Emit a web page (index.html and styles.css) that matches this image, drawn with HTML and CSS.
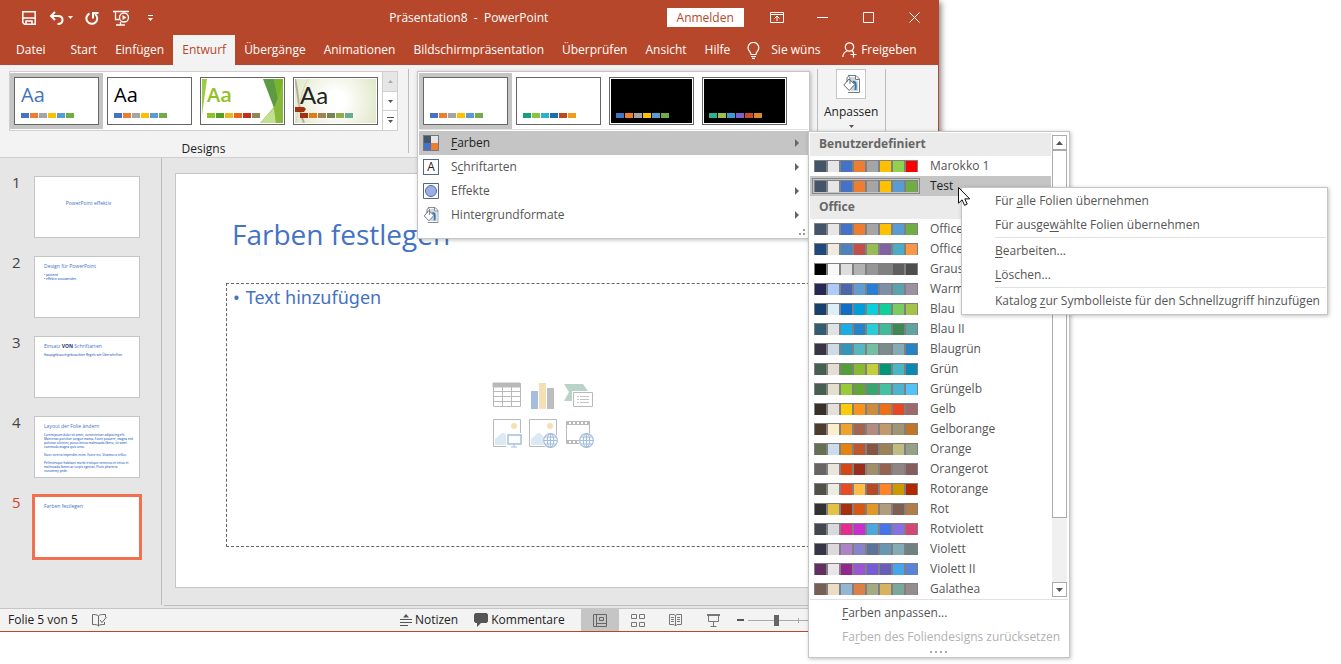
FILE: index.html
```html
<!DOCTYPE html>
<html lang="de">
<head>
  <meta charset="UTF-8">
  <title>Präsentation8 - PowerPoint</title>
  <link rel="stylesheet" href="styles.css">
</head>
<body>
  <div class="app">
    <header class="titlebar">
      <div class="quick">
        <button class="tool" aria-label="Speichern"><svg width="14" height="14" viewBox="0 0 14 14" fill="none" stroke="#fff" stroke-width="1.5"><path d="M.8.8h12.4v12.4H2.5L.8 11.5zM1 7h12M4 13v-3h6v3"/></svg></button>
        <button class="tool wide" aria-label="Rückgängig"><svg width="24" height="14" viewBox="0 0 24 14" fill="none" stroke="#fff" stroke-width="2"><path d="M6 1 2 5l4 4M2 5h7c3.500 0 4.500 2 4.500 4 0 2.500-2 4-5 4"/><path d="M19 5h5l-2.500 3z" fill="#fff" stroke="none"/></svg></button>
        <button class="tool" aria-label="Wiederholen"><svg width="14" height="14" viewBox="0 0 14 14" fill="none" stroke="#fff" stroke-width="2"><path d="M4.500 2.500A5.400 5.400 0 1 0 10 3M8 7.500V2h5.500"/></svg></button>
        <button class="tool" aria-label="Von Beginn an"><svg width="17" height="16" viewBox="0 0 17 16" fill="none" stroke="#fff" stroke-width="1.300"><path d="M0 1.500h16M2.500 2v7.500H6M3 15h9M7.500 12v3"/><circle cx="11" cy="7.500" r="4.500"/><path d="M9.500 5v5l4-2.500z" fill="#fff" stroke="none"/></svg></button>
        <button class="tool" aria-label="Symbolleiste anpassen"><svg width="7" height="8" viewBox="0 0 7 8" fill="#fff"><path d="M1 1h5v1H1zM1 4h5L3.500 7z"/></svg></button>
      </div>
      <div class="doc-title">Präsentation8&nbsp; -&nbsp; PowerPoint</div>
      <div class="window-tools">
        <button class="login">Anmelden</button>
        <button class="win" aria-label="Menüband-Anzeigeoptionen"><svg width="14" height="11" viewBox="0 0 14 11" fill="none" stroke="#fff"><path d="M.5.5h13v10H.5zM.5 2.500h13M7 9V4.500M4.500 6.500 7 4l2.500 2.500"/></svg></button>
        <button class="win" aria-label="Minimieren"><svg width="11" height="11" stroke="#fff"><path d="M0 5.500h11"/></svg></button>
        <button class="win" aria-label="Maximieren"><svg width="11" height="11" fill="none" stroke="#fff"><path d="M.5.5h10v10H.5z"/></svg></button>
        <button class="win" aria-label="Schließen"><svg width="11" height="11" stroke="#fff"><path d="m.5.5 10 10M10.500.5l-10 10"/></svg></button>
      </div>
    </header>

    <nav class="tabs">
      <button class="tab file">Datei</button>
      <button class="tab">Start</button>
      <button class="tab">Einfügen</button>
      <button class="tab active">Entwurf</button>
      <button class="tab">Übergänge</button>
      <button class="tab">Animationen</button>
      <button class="tab">Bildschirmpräsentation</button>
      <button class="tab">Überprüfen</button>
      <button class="tab">Ansicht</button>
      <button class="tab">Hilfe</button>
      <label class="ask">
        <svg width="13" height="17" viewBox="0 0 13 17" fill="none" stroke="#fff" stroke-width="1.200"><path d="M4 12.500C4 9.500 1 9 1 5.800a5.300 5.300 0 0 1 10.800 0C11.800 9 9 9.500 9 12.500zM4 14.500h5M5 16.400h3"/></svg>
        <input type="text" value="Sie wünschen" aria-label="Sie wünschen">
      </label>
      <button class="share"><svg width="15" height="17" viewBox="0 0 15 17" fill="none" stroke="#fff" stroke-width="1.200"><circle cx="7.500" cy="5" r="4.200"/><path d="M.8 15c.2-3 1.500-5 4.200-6M10 9l1 1M8.500 12.500h6M11.500 9.500v6"/></svg>Freigeben</button>
    </nav>

    <section class="ribbon">
      <div class="group designs">
        <div class="gallery">
          <button class="theme selected" aria-label="Office"><span class="sheet"><span class="aa blue">Aa</span><span class="dots" data-colors="4472c4 ed7d31 a5a5a5 ffc000 5b9bd5 70ad47"></span></span></button>
          <button class="theme" aria-label="Office-Design"><span class="sheet"><span class="aa">Aa</span><span class="dots" data-colors="4472c4 ed7d31 a5a5a5 ffc000 5b9bd5 70ad47"></span></span></button>
          <button class="theme" aria-label="Facette"><span class="sheet">
            <svg class="art" viewBox="0 0 81 44" preserveAspectRatio="none"><path d="M0 0h5L0 36z" fill="#9bcc42"/><path d="M64 0h17v44H58l14-16z" fill="#8fc43c"/><path d="M61 0h11l4 20-4 9z" fill="#5d9a43"/><path d="M72 0h9v4l-5 16z" fill="#79b52b"/><path d="m58 44 14-15 2 15z" fill="#c3df92"/><path d="m72 29 9-22v37h-7z" fill="#86b93a"/></svg>
            <span class="aa facet">Aa</span><span class="dots" data-colors="90c226 54a021 e6b91e e76618 c42f1a 918655"></span></span></button>
          <button class="theme" aria-label="Fetzen"><span class="sheet organic">
            <svg class="art" viewBox="0 0 81 44" preserveAspectRatio="none" fill="none"><path d="M0 0c4 15 2 28 9 44" stroke="#b9ad99" stroke-width="2"/><path d="M13 0C6 12 3 30 1 44" stroke="#d7d6bd"/><path d="M0 28h9l2 2-2 3H0z" fill="#a5300f"/></svg>
            <span class="aa gothic">Aa</span><span class="dots" data-colors="a5300f de7e18 9f8351 728653 92aa4c 6aac91"></span></span></button>
          <div class="gallery-nav">
            <button aria-label="Nach oben" disabled><svg width="5" height="3" fill="#aaa"><path d="M0 3h5L2.500 0z"/></svg></button>
            <button aria-label="Nach unten"><svg width="5" height="3" fill="#555"><path d="M0 0h5L2.500 3z"/></svg></button>
            <button aria-label="Weitere"><svg width="7" height="7" fill="#555"><path d="M0 0h7v1H0zM1 3h5L3.500 6z"/></svg></button>
          </div>
        </div>
        <div class="group-label">Designs</div>
      </div>
      <div class="group customize">
        <button class="adjust">
          <span class="adjust-icon"><svg width="17" height="18" viewBox="0 0 17 18"><use href="#bucket"/></svg></span>
          <span>Anpassen</span>
          <svg width="5" height="3" fill="#555"><path d="M0 0h5L2.500 3z"/></svg>
        </button>
      </div>
    </section>

    <main class="workspace">
      <aside class="slides">
        <div class="slide-row"><span class="num">1</span><div class="mini center"><p class="mini-title">PowerPoint effektiv</p></div></div>
        <div class="slide-row"><span class="num">2</span><div class="mini"><p class="mini-title">Design für PowerPoint</p><p>• passend<br>• effektiv anzuwenden</p></div></div>
        <div class="slide-row"><span class="num">3</span><div class="mini"><p class="mini-title">Einsatz <b>VON</b> Schriftarten</p><p>Hauptgebrauch gebrauchter Regeln wie Überschriften</p></div></div>
        <div class="slide-row"><span class="num">4</span><div class="mini"><p class="mini-title">Layout der Folie ändern</p><p>Loremipsum dolor sit amet, consectetuer adipiscing elit. Maecenas porttitor congue massa. Fusce posuere, magna sed pulvinar ultricies, purus lectus malesuada libero, sit amet commodo magna quis urna.</p><p>Nunc viverra imperdiet enim. Fusce est. Vivamus a tellus.</p><p>Pellentesque habitant morbi tristique senectus et netus et malesuada fames ac turpis egestas. Proin pharetra nonummy pede.</p></div></div>
        <div class="slide-row current"><span class="num">5</span><div class="mini"><p class="mini-title">Farben festlegen</p></div></div>
      </aside>
      <div class="stage">
        <article class="slide">
          <h1>Farben festlegen</h1>
          <div class="placeholder">
            <p class="bullet">Text hinzufügen</p>
            <div class="inserts">
              <button aria-label="Tabelle einfügen"><svg width="30" height="28" fill="none" stroke="#b9b9b9"><path d="M1 1h27v4H1z" fill="#b9b9b9"/><path d="M1.500 1.500h27v23h-27zM1.500 9.500h27M1.500 14.500h27M1.500 19.500h27M10.500 5v19M19.500 5v19"/></svg></button>
              <button aria-label="Diagramm einfügen"><svg width="30" height="28"><path d="M3 9h7v18H3z" fill="#a5bedd"/><path d="M11 1h7v26h-7z" fill="#f5dfb5"/><path d="M19 6h7v21h-7z" fill="#bdbdbd"/></svg></button>
              <button aria-label="SmartArt einfügen"><svg width="30" height="28"><path d="M0 2h19l5 7H9v10H0l5-9z" fill="#b9d3c8"/><path d="M8 9h22v17H8z" fill="#fff"/><path d="M9.500 10.500h19v14h-19z" fill="#fff" stroke="#b9b9b9"/><path d="M13 14.500h2m1 0h9m-12 3h2m1 0h9m-12 3h2m1 0h9" stroke="#c4c4c4"/></svg></button>
              <button aria-label="Bilder einfügen"><svg width="30" height="30"><path d="M1.500 1.500h27v27h-27z" fill="#fff" stroke="#b9b9b9"/><circle cx="22" cy="8" r="3" fill="#f5dfb5"/><path d="M3 27v-6l7-6h2l7 7v5z" fill="#dce8f2"/><path d="M14 15h16v15H14z" fill="#fff"/><path d="M16 17h13v9H16z" fill="none" stroke="#a5bedd" stroke-width="1.500"/><path d="M22 26v3m-3 0h6" stroke="#a5bedd"/></svg></button>
              <button aria-label="Onlinebilder einfügen"><svg width="30" height="30"><path d="M1.500 1.500h27v27h-27z" fill="#fff" stroke="#b9b9b9"/><circle cx="22" cy="8" r="3" fill="#f5dfb5"/><path d="M3 27v-6l7-6h2l7 7v5z" fill="#dce8f2"/><use href="#globe"/></svg></button>
              <button aria-label="Video einfügen"><svg width="30" height="30"><path d="M2.500 3.500h23v22h-23zM2.500 6.500h23M2.500 22.500h23" fill="#fff" stroke="#b9b9b9"/><path d="M3 5h23M3 24h23" stroke="#b9b9b9" stroke-width="3" stroke-dasharray="2 2"/><use href="#globe"/></svg></button>
            </div>
          </div>
        </article>
      </div>
    </main>

    <footer class="status">
      <span class="count">Folie 5 von 5</span>
      <button class="spell" aria-label="Rechtschreibung"><svg width="15" height="13" viewBox="0 0 15 13" fill="none" stroke="#666"><path d="M6.500 12V2C5 .5 2 .5.500.5v10c3 0 5 0 6 1.500 1-1.500 3-1.500 6-1.500V8M6.500 2C8 .5 9 .5 13.500.5V3M8 6l2 2.500L14.500 3"/></svg></button>
      <div class="status-right">
        <button class="note"><svg width="12" height="12" stroke="#555"><path d="M0 5.500h12M0 8.500h12M0 11.500h8"/><path d="M3 3.500h6L6 0z" fill="#555" stroke="none"/></svg>Notizen</button>
        <button class="note comment"><svg width="14" height="14" fill="#555"><path d="M1.500 0h11L14 1.500v7L12.500 10H7l-4 4v-4H1.500L0 8.500v-7z"/></svg>Kommentare</button>
        <button class="view on" aria-label="Normal"><svg width="14" height="13" fill="none" stroke="#666"><path d="M.5.5h13v12H.5zM3.500.5v12M3.500 9.500h10M6.500 3.500h4v3h-4z"/></svg></button>
        <button class="view" aria-label="Foliensortierung"><svg width="14" height="13" fill="none" stroke="#777"><path d="M.5.5h5v4h-5zM8.500.5h5v4h-5zM.5 8.500h5v4h-5zM8.500 8.500h5v4h-5z"/></svg></button>
        <button class="view" aria-label="Leseansicht"><svg width="14" height="13" fill="none" stroke="#777"><path d="M6.500 12V1.500L5 .5H.5v10H5l1.500 1.500L8 10.500h4.500V.5H8L6.500 1.500M2 3.500h3m-3 2h3m-3 2h3m3-4h3m-3 2h3m-3 2h3"/></svg></button>
        <button class="view" aria-label="Bildschirmpräsentation"><svg width="13" height="13" fill="none" stroke="#777"><path d="M0 1h13" stroke-width="2"/><path d="M1.500 2v5.500h10V2M6.500 8v4M3.500 12.500h6"/></svg></button>
        <div class="zoom">
          <button aria-label="Verkleinern"><svg width="7" height="2"><path d="M0 1h7" stroke="#555" stroke-width="2"/></svg></button>
          <input type="range" min="0" max="100" value="27" aria-label="Zoom">
        </div>
      </div>
    </footer>
  </div>

  <div class="popup variants">
    <div class="variant-list">
      <button class="theme selected" aria-label="Variante 1"><span class="sheet"><span class="dots" data-colors="4472c4 ed7d31 a5a5a5 ffc000 5b9bd5 70ad47"></span></span></button>
      <button class="theme" aria-label="Variante 2"><span class="sheet"><span class="dots" data-colors="1b9e7b 8bc53f 31b0ce 1b6fac b94a1a f09d1c"></span></span></button>
      <button class="theme" aria-label="Variante 3"><span class="sheet dark"><span class="dots" data-colors="4472c4 ed7d31 a5a5a5 ffc000 5b9bd5 70ad47"></span></span></button>
      <button class="theme" aria-label="Variante 4"><span class="sheet dark"><span class="dots" data-colors="2bb291 9dc04a 3c9bd1 825ec8 cc4830 d98a2b"></span></span></button>
    </div>
    <button class="menu-item open"><svg width="16" height="16"><path d="M0 0h16v16H0z" fill="#777"/><path d="M1 1h7v7H1z" fill="#44546a"/><path d="M8 1h7v7H8z" fill="#e7e6e6"/><path d="M1 8h7v7H1z" fill="#4472c4"/><path d="M8 8h7v7H8z" fill="#ed7d31"/></svg><span><u>F</u>arben</span><i class="arrow"></i></button>
    <button class="menu-item"><span class="letter">A</span><span>S<u>c</u>hriftarten</span><i class="arrow"></i></button>
    <button class="menu-item"><svg width="16" height="16"><path d="M.5.5h15v15H.5z" fill="#fff" stroke="#566780"/><circle cx="8" cy="8" r="5.500" fill="#9dafe0" stroke="#4472c4"/></svg><span>Effekte</span><i class="arrow"></i></button>
    <button class="menu-item"><svg width="16" height="16" viewBox="0 0 17 18"><use href="#bucket"/></svg><span>Hintergrundformate</span><i class="arrow"></i></button>
    <svg class="grip" width="6" height="6" fill="#999"><path d="M4 0h2v2H4zM0 4h2v2H0zM4 4h2v2H4z"/></svg>
  </div>

  <div class="popup colors">
    <div class="color-body">
      <div class="color-list" id="colorList"></div>
      <div class="scrollbar">
        <button aria-label="Nach oben blättern"><svg width="7" height="4" fill="#555"><path d="M0 4h7L3.500 0z"/></svg></button>
        <div class="thumb"></div>
        <button aria-label="Nach unten blättern"><svg width="7" height="4" fill="#555"><path d="M0 0h7L3.500 4z"/></svg></button>
      </div>
    </div>
    <div class="color-footer">
      <button><u>F</u>arben anpassen...</button>
      <button disabled>Fa<u>r</u>ben des Foliendesigns zurücksetzen</button>
      <svg width="18" height="2" fill="#aaa"><path d="M0 0h2v2H0zM5 0h2v2H5zM10 0h2v2h-2zM15 0h2v2h-2z"/></svg>
    </div>
  </div>

  <div class="popup context">
    <button>Für <u>a</u>lle Folien übernehmen</button>
    <button>Für ausge<u>w</u>ählte Folien übernehmen</button>
    <hr>
    <button><u>B</u>earbeiten...</button>
    <button><u>L</u>öschen...</button>
    <hr>
    <button>Katalog <u>z</u>ur Symbolleiste für den Schnellzugriff hinzufügen</button>
  </div>

  <svg class="cursor" width="13" height="19" viewBox="0 0 13 19"><path d="M.5.5v15.700l3.600-3.400 2.400 5.500 2.700-1.200-2.400-5.200h4.900z" fill="#fff" stroke="#111"/></svg>

  <svg class="defs" width="0" height="0">
    <symbol id="bucket" viewBox="0 0 17 18">
      <path d="M5 .5h8l3.500 3.500v13.500H5" fill="#fff" stroke="#777"/>
      <path d="M12.500.5v4h4" fill="none" stroke="#777"/>
      <path d="M8 2h4v3l3 1v10H8z" fill="#c5d9eb"/>
      <path d="M10 7c3-1 3 3 2.500 8" fill="none" stroke="#3a75ae" stroke-width="2"/>
      <path d="M6 4 .8 10l5.400 5.500 5.600-6z" fill="#fff" stroke="#666"/>
      <path d="M4 7V3.500C4 1 7 1 7 3.500V9" fill="none" stroke="#666"/>
    </symbol>
    <symbol id="globe" viewBox="0 0 30 30">
      <circle cx="23" cy="23" r="8" fill="#fff"/>
      <g fill="none" stroke="#a5bedd" stroke-width="1.200"><circle cx="22.500" cy="22.500" r="6.800"/><ellipse cx="22.500" cy="22.500" rx="3.200" ry="6.800"/><path d="M22.500 15.500v14M15.500 22.500h14M16.500 19h12M16.500 26h12"/></g>
    </symbol>
  </svg>

  <script>
    const palettes = [
      ["Benutzerdefiniert"],
      ["Marokko 1", "44546a e7e6e6 4472c4 ed7d31 a5a5a5 ffc000 92d050 ff0000"],
      ["Test", "44546a e7e6e6 4472c4 ed7d31 a5a5a5 ffc000 5b9bd5 70ad47"],
      ["Office"],
      ["Office", "44546a e7e6e6 4472c4 ed7d31 a5a5a5 ffc000 5b9bd5 70ad47"],
      ["Office 2007 - 2010", "1f497d eeece1 4f81bd c0504d 9bbb59 8064a2 4bacc6 f79646"],
      ["Graustufe", "000000 f8f8f8 dddddd b2b2b2 969696 808080 5f5f5f 4d4d4d"],
      ["Warmes Blau", "242852 accbf9 4a66ac 629dd1 297fd5 7f8fa9 5aa2ae 9d90a0"],
      ["Blau", "17406d dbeff9 0f6fc6 009dd9 0bd0d9 10cf9b 7cca62 a5c249"],
      ["Blau II", "335b74 dfe3e5 1cade4 2683c6 27ced7 42ba97 3e8853 62a39f"],
      ["Blaugrün", "373545 cedbe6 3494ba 58b6c0 75bda7 7a8c8e 84acb6 2683c6"],
      ["Grün", "455f51 e3ded1 549e39 8ab833 c0cf3a 029676 4ab5c4 0989b1"],
      ["Grüngelb", "455f51 e2dfcc 99cb38 63a537 37a76f 44c1a3 4eb3cf 51c3f9"],
      ["Gelb", "39302a e5dedb ffca08 f8931d ce8d3e ec7016 e64823 9c6a6a"],
      ["Gelborange", "4e3b30 fbeec9 f0a22e a5644e b58b80 c3986d a19574 c17529"],
      ["Orange", "637052 ccddea e48312 bd582c 865640 9b8357 c2bc80 94a088"],
      ["Orangerot", "696464 e9e5dc d34817 9b2d1f a28e6a 956251 918485 855d5d"],
      ["Rotorange", "505046 eeece1 e84c22 ffbd47 b64926 ff8427 cc9900 b22600"],
      ["Rot", "323232 e5c243 a5300f d55816 e19825 b19c7d 7f5f52 b27d49"],
      ["Rotviolett", "454551 d8d9dc e32d91 c830cc 4ea6dc 4775e7 8971e1 d54773"],
      ["Violett", "373545 dcd8dc ad84c6 8784c7 5d739a 6997af 84acb6 6f8183"],
      ["Violett II", "632e62 eae5eb 92278f 9b57d3 755dd9 665eb8 45a5ed 5982db"],
      ["Galathea", "775f55 ebddc3 94b6d2 dd8047 a5ab81 d8b25c 7ba79d 968c8c"]
    ];

    const cells = colors => colors.split(" ").map(c => `<i style="background:#${c}"></i>`).join("");

    document.getElementById("colorList").innerHTML = palettes.map(([name, colors]) => {
      if (!colors) return `<div class="color-head">${name}</div>`;
      const state = name === "Test" ? " hover" : "";
      return `<button class="color-row${state}"><span class="swatch">${cells(colors)}</span>${name}</button>`;
    }).join("");

    document.querySelectorAll(".dots").forEach(el => {
      el.innerHTML = cells(el.dataset.colors);
    });
  </script>
</body>
</html>
```
FILE: styles.css
```css
* {
  box-sizing: border-box;
}
body {
  margin: 0;
  background: #fff;
  color: #222;
  font: 12px/16px "Open Sans", "Noto Sans", sans-serif;
  overflow: hidden;
}
button {
  margin: 0;
  padding: 0;
  border: 0;
  background: none;
  color: inherit;
  font: inherit;
  white-space: nowrap;
}
svg {
  display: block;
  flex: none;
}
p,
h1 {
  margin: 0;
}
u {
  text-underline-offset: 2px;
}

/* main window */
.app {
  width: 70%;
  height: calc(100vh - 32px);
  display: flex;
  flex-direction: column;
  background: #e6e6e6;
  border: solid #b7472a;
  border-width: 0 1px 1px 0;
  box-shadow: 2px 2px 6px rgba(0, 0, 0, 0.5);
}
.titlebar {
  height: 35px;
  display: grid;
  grid-template-columns: 1fr auto 1fr;
  align-items: center;
  background: #b7472a;
  color: #fff;
}
.quick {
  display: flex;
  align-items: center;
  gap: 9px;
  padding-left: 19px;
}
.tool {
  width: 20px;
  height: 24px;
  display: flex;
  align-items: center;
  justify-content: center;
}
.tool.wide {
  width: 25px;
}
.window-tools {
  display: flex;
  align-items: center;
  justify-content: flex-end;
}
.login {
  width: 77px;
  height: 19px;
  margin-right: 10px;
  background: #fff;
  color: #b7472a;
}
.win {
  width: 46px;
  height: 32px;
  display: flex;
  align-items: center;
  justify-content: center;
}
.tabs {
  height: 30px;
  display: flex;
  background: #b7472a;
  color: #fff;
}
.tab {
  padding: 0 9px;
}
.tab.file {
  padding: 0 16px;
}
.tab.active {
  background: #f3f3f3;
  color: #b7472a;
}
.ask {
  display: flex;
  align-items: center;
  gap: 11px;
  margin-left: 8px;
}
.ask input {
  width: 50px;
  padding: 0;
  border: 0;
  background: none;
  color: #fff;
  font: inherit;
}
.share {
  display: flex;
  align-items: center;
  gap: 4px;
  margin-left: auto;
  padding-right: 21px;
}

/* ribbon */
.ribbon {
  height: 93px;
  display: flex;
  background: #f3f3f3;
  border-bottom: 1px solid #cfcfcf;
}
.group {
  margin: 4px 0;
  border-right: 1px solid #bdbdbd;
}
.designs {
  padding: 2px 10px 0 9px;
}
.gallery {
  display: flex;
  height: 60px;
  background: #fff;
  border: 1px solid #cfcfcf;
}
.theme {
  width: 93px;
  height: 56px;
  margin-top: 1px;
  padding: 4px;
}
.theme.selected {
  background: #c5c5c5;
}
.sheet {
  position: relative;
  display: flex;
  flex-direction: column;
  justify-content: flex-end;
  width: 85px;
  height: 48px;
  padding: 0 6px 6px;
  border: 1px solid #666;
  background: #fff;
  text-align: left;
}
.sheet.dark {
  background: #000;
  box-shadow: inset 0 0 0 1px #fff;
}
.sheet.organic {
  background: radial-gradient(circle, #fff 20%, #dfe6c6 100%);
  box-shadow: inset 0 0 0 1px #fff;
}
.art {
  position: absolute;
  inset: 1px;
  width: 81px;
  height: 44px;
}
.aa {
  position: relative;
  margin-bottom: 6px;
  font-size: 20px;
  line-height: 24px;
  color: #000;
}
.aa.blue {
  color: #4472c4;
}
.aa.facet {
  color: #90c226;
  font-weight: 600;
}
.aa.gothic {
  color: #222;
  font-family: Lato, sans-serif;
  font-size: 24px;
}
.dots {
  position: relative;
  display: flex;
  gap: 1px;
}
.dots i {
  width: 8px;
  height: 5px;
}
.gallery-nav {
  display: flex;
  flex-direction: column;
  border-left: 1px solid #cfcfcf;
}
.gallery-nav button {
  flex: 1;
  width: 14px;
  display: flex;
  align-items: center;
  justify-content: center;
}
.gallery-nav button + button {
  border-top: 1px solid #cfcfcf;
}
.gallery-nav button:disabled {
  background: #e6e6e6;
}
.group-label {
  padding-top: 10px;
  text-align: center;
}
.customize {
  width: 69px;
  margin-left: auto;
  margin-right: 52px;
  border-left: 1px solid #bdbdbd;
}
.adjust {
  width: 100%;
  display: flex;
  flex-direction: column;
  align-items: center;
  gap: 5px;
}
.adjust-icon {
  width: 30px;
  height: 30px;
  display: flex;
  align-items: center;
  justify-content: center;
  background: #fff;
  border: 1px solid #c5c5c5;
}

/* slides */
.workspace {
  flex: 1;
  min-height: 0;
  display: flex;
}
.slides {
  width: 162px;
  display: flex;
  flex-direction: column;
  gap: 18px;
  margin-bottom: 3px;
  padding-top: 18px;
  border-right: 1px solid #bdbdbd;
}
.slide-row {
  display: flex;
  gap: 14px;
  padding-left: 12px;
}
.num {
  width: 8px;
  font-size: 15px;
  line-height: 12px;
  color: #444;
}
.mini {
  width: 106px;
  height: 62px;
  padding: 7px 6px 0 9px;
  overflow: hidden;
  background: #fff;
  border: 1px solid #c5c5c5;
  color: #4472c4;
  font-size: 3px;
  line-height: 4px;
}
.mini p + p {
  margin-top: 4px;
  font-weight: 600;
}
.mini .mini-title {
  font-size: 5px;
  line-height: 5px;
}
.mini b {
  color: #1c3468;
}
.mini.center {
  padding-top: 24px;
  text-align: center;
}
.current .num {
  color: #d24726;
}
.current .mini {
  border-color: #fff;
  outline: 3px solid #f07050;
  outline-offset: -1px;
}
.stage {
  flex: 1;
  display: flex;
  margin: 0 0 2px 2px;
  padding: 15px 25px 17px 11px;
  border-bottom: 1px solid #bdbdbd;
}
.slide {
  flex: 1;
  display: flex;
  flex-direction: column;
  padding: 40px 52px 40px 50px;
  background: #fff;
  border: 1px solid #c5c5c5;
  color: #4472c4;
}
.slide h1 {
  height: 69px;
  padding-left: 6px;
  font-size: 28px;
  line-height: 40px;
  font-weight: 400;
}
.placeholder {
  flex: 1;
  display: flex;
  flex-direction: column;
  align-items: center;
  border: 1px dashed #666;
}
.bullet {
  align-self: stretch;
  padding-left: 6px;
  font-family: "Noto Sans", sans-serif;
  font-size: 18px;
  line-height: 26px;
}
.bullet::before {
  content: "•";
  padding-right: 6px;
}
.inserts {
  display: grid;
  grid-template-columns: repeat(3, 30px);
  gap: 8px 6px;
  margin-top: 72px;
}

/* status bar */
.status {
  height: 23px;
  display: flex;
  align-items: center;
  padding-left: 8px;
  background: #f3f3f3;
  border-top: 1px solid #c5c5c5;
}
.spell {
  margin-left: 14px;
}
.status-right {
  display: flex;
  align-self: stretch;
  margin-left: auto;
}
.note {
  display: flex;
  align-items: center;
  gap: 3px;
  margin-right: 16px;
}
.view {
  width: 38px;
  display: flex;
  align-items: center;
  justify-content: center;
}
.view.on {
  background: #c5c5c5;
}
.zoom {
  width: 205px;
  display: flex;
  align-items: center;
  gap: 4px;
  padding-left: 4px;
}
.zoom input {
  width: 102px;
  height: 12px;
  margin: 0;
  appearance: none;
  background: linear-gradient(#aaa, #aaa) center / 100% 1px no-repeat,
    linear-gradient(#aaa, #aaa) center / 1px 5px no-repeat;
}
.zoom input::-webkit-slider-thumb {
  appearance: none;
  width: 5px;
  height: 11px;
  background: #666;
}

/* menus */
.popup {
  position: absolute;
  background: #fff;
  border: 1px solid #c5c5c5;
  box-shadow: 1px 1px 4px rgba(0, 0, 0, 0.25);
  color: #555;
}
.variants {
  left: 417px;
  top: 71px;
  width: 393px;
  padding: 1px;
}
.variant-list {
  display: flex;
  margin-bottom: 1px;
  border-bottom: 1px solid #e1e1e1;
}
.variants .theme {
  margin-top: 0;
}
.menu-item {
  width: 100%;
  height: 24px;
  display: flex;
  align-items: center;
  gap: 12px;
  padding: 0 9px 0 4px;
}
.menu-item.open {
  background: #c5c5c5;
  color: #222;
}
.letter {
  width: 16px;
  height: 16px;
  border: 1px solid #566780;
  color: #222;
  line-height: 14px;
}
.arrow {
  margin-left: auto;
  border: solid transparent;
  border-width: 4px 0 4px 4px;
  border-left-color: #666;
}
.grip {
  margin: 2px 3px 2px auto;
}
.colors {
  left: 808px;
  top: 131px;
  width: 262px;
  padding: 1px;
}
.color-body {
  display: flex;
  border-bottom: 1px solid #e1e1e1;
}
.color-list {
  flex: 1;
}
.color-head {
  height: 23px;
  padding-left: 9px;
  background: #ebebeb;
  color: #666;
  font-weight: 700;
  line-height: 22px;
}
.color-row {
  width: 100%;
  height: 20px;
  display: flex;
  align-items: center;
  gap: 12px;
  padding-left: 4px;
}
.color-row.hover {
  background: #c5c5c5;
  color: #222;
}
.swatch {
  display: flex;
  gap: 2px;
  width: 104px;
  height: 12px;
  padding: 1px 1px 0;
  background: #808080;
}
.swatch i {
  flex: 1;
}
.hover .swatch {
  outline: 1px solid #888;
  outline-offset: 1px;
}
.scrollbar {
  width: 17px;
  display: flex;
  flex-direction: column;
  padding: 2px 1px;
}
.scrollbar button {
  height: 15px;
  display: flex;
  align-items: center;
  justify-content: center;
  background: #fff;
  border: 1px solid #aaa;
}
.thumb {
  flex: 1;
  border: 1px solid #aaa;
  box-shadow: 0 64px #f0f0f0;
  margin-bottom: 64px;
}
.color-footer {
  display: flex;
  flex-direction: column;
  align-items: center;
  padding-top: 1px;
}
.color-footer button {
  width: 100%;
  height: 24px;
  padding-left: 32px;
  text-align: left;
}
.color-footer button:disabled {
  color: #b1b1b1;
}
.color-footer svg {
  margin: 2px 0 3px;
}
.context {
  left: 961px;
  top: 187px;
  width: 367px;
  padding: 1px;
}
.context button {
  width: 100%;
  height: 24px;
  padding-left: 32px;
  text-align: left;
}
.context hr {
  margin: 0 0 1px 32px;
  border: 0;
  border-top: 1px solid #e1e1e1;
}
.cursor {
  position: absolute;
  left: 958px;
  top: 187px;
}
.defs {
  position: absolute;
}
```
